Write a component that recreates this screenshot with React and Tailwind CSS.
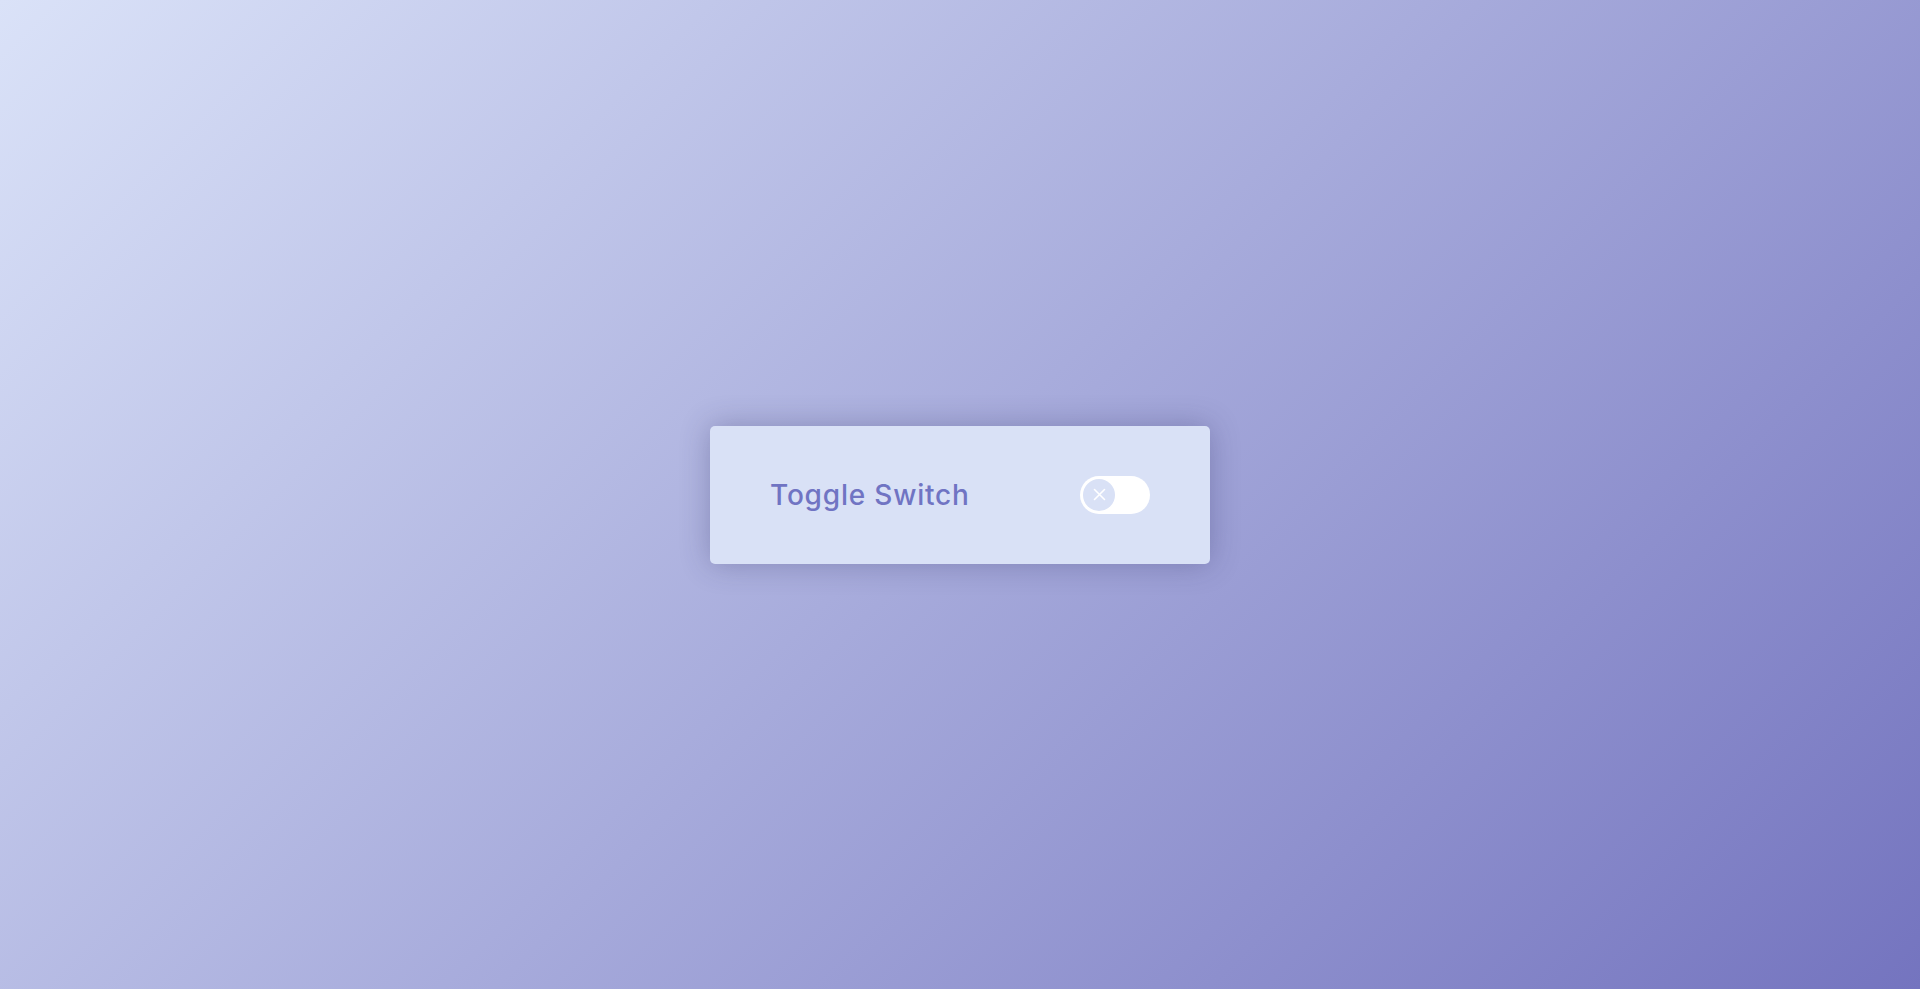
export default function App() {
  return (
    <div className="w-full h-[989px] flex items-center justify-center bg-[linear-gradient(135deg,#dae2f8_0%,#7474bf_100%)]" style={{ fontFamily: "Inter, 'Noto Sans', sans-serif" }}>
      <div className="w-[500px] h-[138px] bg-[#d9e1f6] rounded-[5px] shadow-[0_0_30px_rgba(40,40,90,0.3)] flex items-center justify-between px-[60px]">
        <span className="text-[28px] font-medium text-[#7074c3] tracking-[0.8px] pt-[1px]">Toggle Switch</span>
        <div className="w-[70px] h-[38px] rounded-full bg-white p-[3px] flex items-center">
          <div className="w-[32px] h-[32px] rounded-full bg-[#d9e1f6] flex items-center justify-center">
            <svg width="13" height="13" viewBox="0 0 13 13" fill="none" stroke="white" strokeWidth="1.6" strokeLinecap="round">
              <path d="M1.5 1.5 L11.5 11.5 M11.5 1.5 L1.5 11.5" />
            </svg>
          </div>
        </div>
      </div>
    </div>
  );
}
